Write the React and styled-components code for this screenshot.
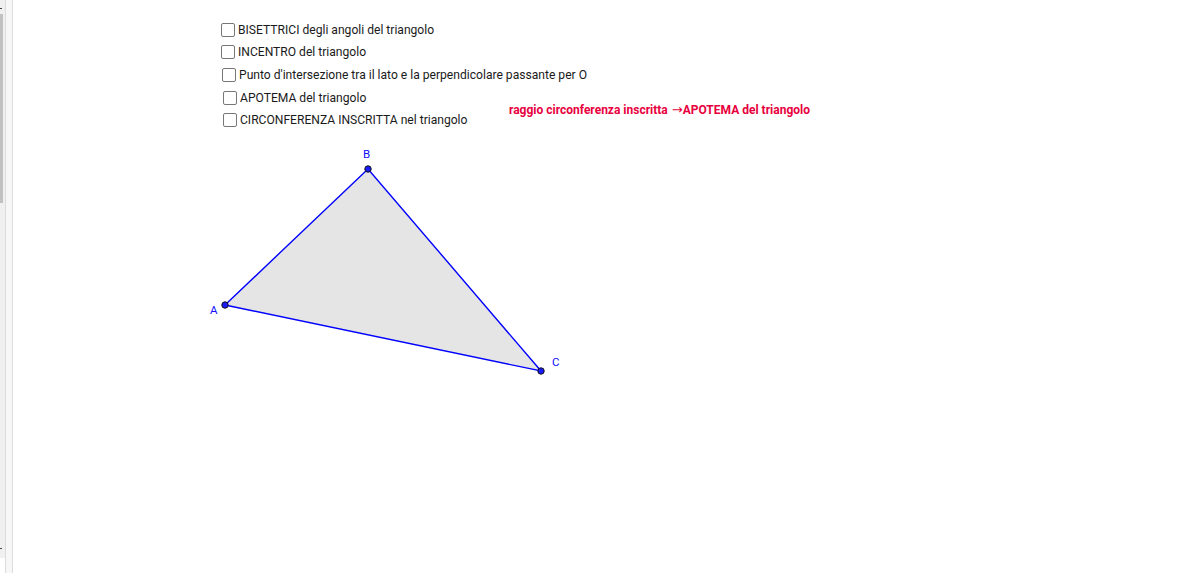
import styled, { createGlobalStyle } from "styled-components";

const Global = createGlobalStyle`
  html, body { margin: 0; padding: 0; background: #ffffff; }
  body { font-family: Roboto, "Noto Sans", sans-serif; overflow: hidden; }
`;

const Page = styled.div`
  display: flex;
  width: 1178px;
  height: 575px;
`;

const Rail = styled.div`
  width: 5px;
  height: 558px;
  background: #f0f0f0;
  position: relative;
  flex: none;
`;

const Thumb = styled.div`
  position: absolute;
  left: 0;
  top: 14px;
  width: 3px;
  height: 189px;
  background: #c1c1c1;
`;

const Tick = styled.div`
  position: absolute;
  left: 0;
  top: ${p => p.y}px;
  width: 2px;
  height: 1px;
  background: #444;
`;

const Gutter = styled.div`
  width: 6px;
  height: 573px;
  border-left: 1px solid #dcdcdc;
  border-right: 1px solid #dcdcdc;
  background: #f7f7f7;
  flex: none;
`;

const Canvas = styled.div`
  position: relative;
  flex: 1;
  height: 575px;
  background: #ffffff;
`;

// GeoGebra-style controls sit at fixed spots on the drawing canvas
const Options = styled.div`
  position: absolute;
  left: 208px;
  top: 18px;
  display: flex;
  flex-direction: column;
`;

const Option = styled.label`
  display: flex;
  align-items: center;
  gap: 3px;
  height: ${p => p.h}px;
  padding-left: ${p => p.shift}px;
  font-size: 12.1px;
  color: #1a1a1a;
  white-space: nowrap;
`;

const Box = styled.span`
  width: 12px;
  height: 12px;
  border: 1px solid #777;
  border-radius: 2px;
  background: #fff;
  flex: none;
`;

const Note = styled.div`
  position: absolute;
  left: 496px;
  top: 102px;
  font-size: 12px;
  font-weight: 700;
  color: #e8003d;
  white-space: nowrap;
`;

const Arrow = styled.span`
  font-family: "DejaVu Sans", sans-serif;
  font-weight: 400;
  font-size: 13px;
  margin-left: 1px;
`;

const Drawing = styled.svg`
  position: absolute;
  left: 0;
  top: 0;
`;

const options = [
  { text: "BISETTRICI degli angoli del triangolo", shift: 0, h: 23 },
  { text: "INCENTRO del triangolo", shift: 0, h: 22 },
  { text: "Punto d'intersezione tra il lato e la perpendicolare passante per O", shift: 1, h: 23 },
  { text: "APOTEMA del triangolo", shift: 2, h: 23 },
  { text: "CIRCONFERENZA INSCRITTA nel triangolo", shift: 2, h: 22 },
];

const off = 13;
const A = [225 - off, 305];
const B = [368 - off, 169];
const C = [541 - off, 371];

const Vertex = ({ p }) => (
  <circle cx={p[0]} cy={p[1]} r="3.2" fill="#1a1aff" stroke="#111" strokeWidth="1" />
);

export default function App() {
  return (
    <>
      <Global />
      <Page>
        <Rail>
          <Tick y={8} />
          <Thumb />
          <Tick y={548} />
        </Rail>
        <Gutter />
        <Canvas>
          <Drawing width="1165" height="575">
            <polygon
              points={`${A} ${B} ${C}`}
              fill="#e5e5e5"
              stroke="#0000ff"
              strokeWidth="1.4"
            />
            <Vertex p={A} />
            <Vertex p={B} />
            <Vertex p={C} />
            <text x={B[0] - 5} y="158" fontSize="11.5" fill="#1010ff" fontFamily="Roboto, sans-serif">B</text>
            <text x={A[0] - 15} y="314" fontSize="11.5" fill="#1010ff" fontFamily="Roboto, sans-serif">A</text>
            <text x={C[0] + 11} y="366" fontSize="11.5" fill="#1010ff" fontFamily="Roboto, sans-serif">C</text>
          </Drawing>
          <Options>
            {options.map((o, i) => (
              <Option key={i} shift={o.shift} h={o.h}>
                <Box />
                {o.text}
              </Option>
            ))}
          </Options>
          <Note>
            raggio circonferenza inscritta <Arrow>→</Arrow>APOTEMA del triangolo
          </Note>
        </Canvas>
      </Page>
    </>
  );
}
